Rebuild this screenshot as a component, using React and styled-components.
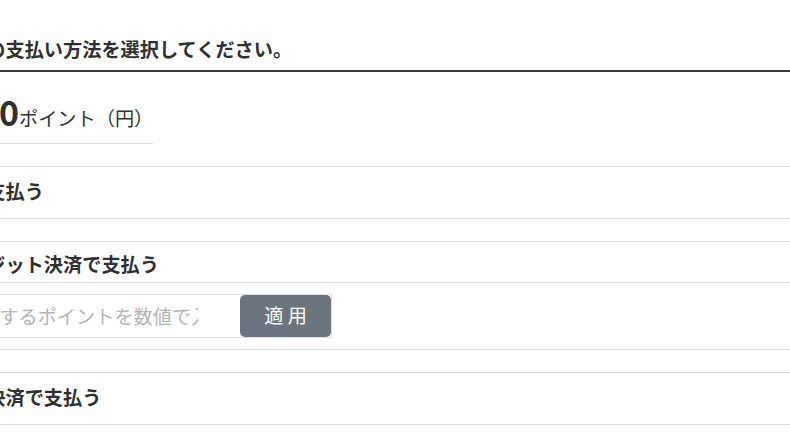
import React from "react";
import styled, { createGlobalStyle } from "styled-components";

const GlobalStyle = createGlobalStyle`
  html, body {
    margin: 0;
    padding: 0;
    background: #ffffff;
  }
  body {
    overflow: hidden;
    font-family: "Noto Sans CJK JP", "Noto Sans", sans-serif;
    color: #333333;
  }
`;

const Page = styled.main`
  margin-left: -148px;
  width: calc(100% + 148px);
`;

const Title = styled.h2`
  margin: 0;
  padding: 35px 0 7px;
  font-size: 19.2px;
  line-height: 28px;
  font-weight: 700;
  color: #2f2f2f;
  white-space: nowrap;
  border-bottom: 2px solid #343a40;
`;

const PointsSection = styled.section`
  padding: 20px 0 22px;
`;

const PointBox = styled.div`
  display: inline-flex;
  align-items: baseline;
  padding-bottom: 11px;
  border-bottom: 1px solid #dedde3;
`;

const PointValue = styled.span`
  display: inline-block;
  width: 167px;
  text-align: right;
  font-size: 34px;
  line-height: 40px;
  font-weight: 700;
  color: #2f2f2f;
`;

const PointUnit = styled.span`
  font-size: 19.2px;
  line-height: 28px;
  color: #333333;
  white-space: nowrap;
`;

const MethodList = styled.div`
  display: flex;
  flex-direction: column;
  gap: 22px;
`;

const Method = styled.section`
  border-top: 1px solid #dedde3;
  border-bottom: 1px solid #dedde3;
`;

const MethodHeader = styled.h3`
  margin: 0;
  padding: ${(p) => (p.$hasBody ? "8px 0 4px" : "10px 0 13px")};
  font-size: 19.2px;
  line-height: 28px;
  font-weight: 700;
  color: #2f2f2f;
  white-space: nowrap;
  border-bottom: ${(p) => (p.$hasBody ? "1px solid #dedde3" : "none")};
`;

const MethodBody = styled.div`
  padding: 11px 0;
`;

const InputGroup = styled.div`
  display: flex;
  align-items: center;
  box-sizing: border-box;
  width: 480px;
  height: 44px;
  border: 1px solid #dedde3;
`;

const PointInput = styled.input`
  flex: 0 0 357px;
  box-sizing: border-box;
  height: 42px;
  padding: 0 12px;
  border: none;
  outline: none;
  background: transparent;
  font-family: inherit;
  font-size: 19.2px;
  color: #333333;
  &::placeholder {
    color: #b4b4b4;
  }
`;

const ApplyButton = styled.button`
  margin-left: auto;
  width: 91px;
  height: 42px;
  padding: 0;
  border: none;
  border-radius: 5px;
  background: #6c757d;
  color: #ffffff;
  font-family: inherit;
  font-size: 19.2px;
  line-height: 1;
  cursor: pointer;
`;

export default function App() {
  return (
    <>
      <GlobalStyle />
      <Page>
        <Title>ご購入商品代金の支払い方法を選択してください。</Title>
        <PointsSection>
          <PointBox>
            <PointValue>1,000</PointValue>
            <PointUnit>ポイント（円）</PointUnit>
          </PointBox>
        </PointsSection>
        <MethodList>
          <Method>
            <MethodHeader>ポイント全額で支払う</MethodHeader>
          </Method>
          <Method>
            <MethodHeader $hasBody>ポイントとクレジット決済で支払う</MethodHeader>
            <MethodBody>
              <InputGroup>
                <PointInput
                  type="text"
                  placeholder="お支払いに使用するポイントを数値で入力してください"
                />
                <ApplyButton type="button">適 用</ApplyButton>
              </InputGroup>
            </MethodBody>
          </Method>
          <Method>
            <MethodHeader>通常クレジット決済で支払う</MethodHeader>
          </Method>
        </MethodList>
      </Page>
    </>
  );
}
